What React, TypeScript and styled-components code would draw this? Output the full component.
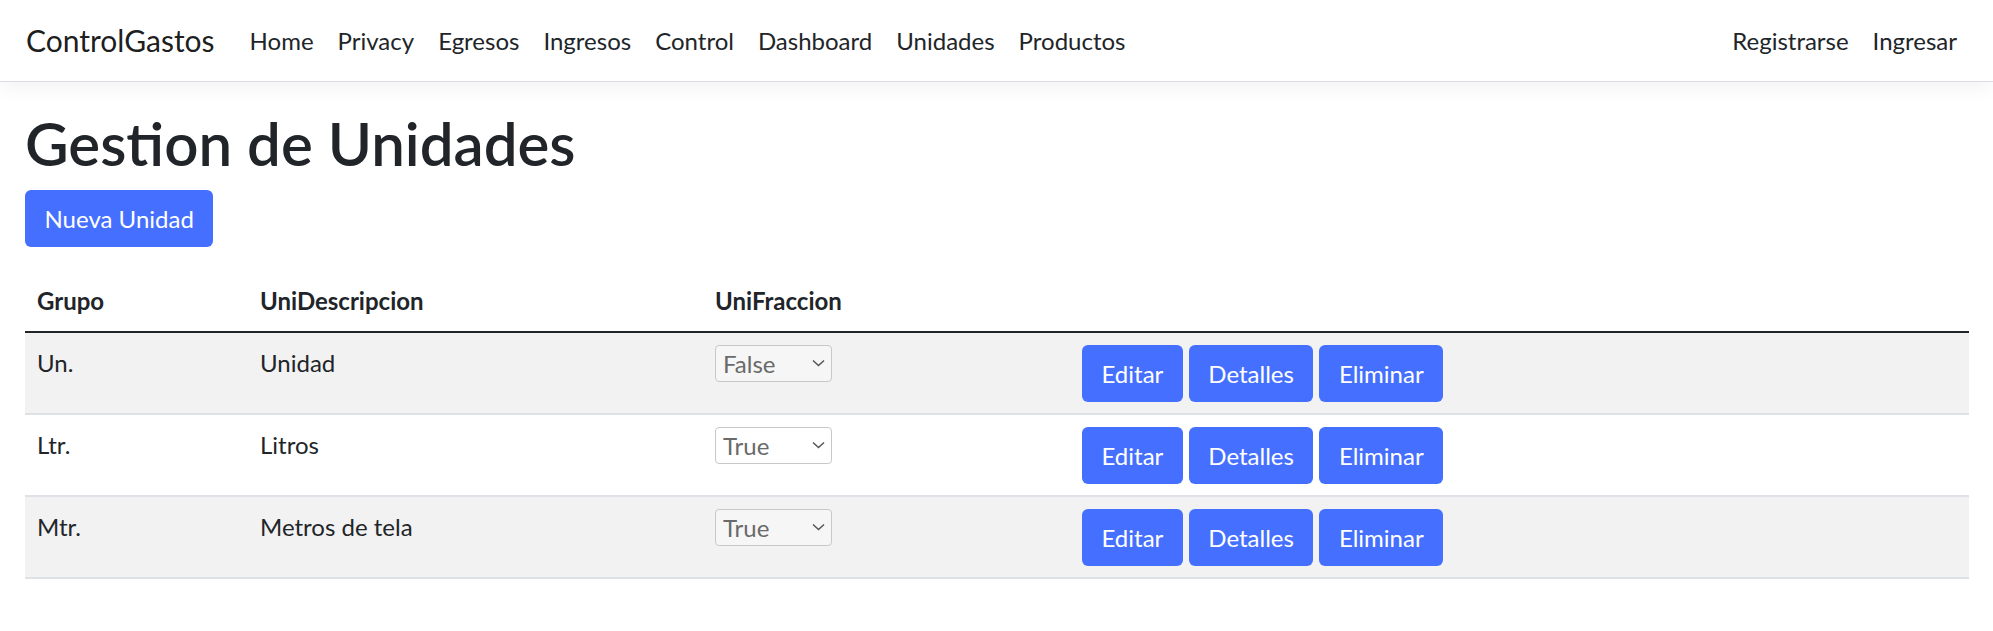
import React from "react";
import styled, { createGlobalStyle } from "styled-components";

const GlobalStyle = createGlobalStyle`
  *, *::before, *::after { box-sizing: border-box; }
  html, body { margin: 0; padding: 0; background: #ffffff; }
  body {
    font-family: Lato, "Open Sans", "Noto Sans", sans-serif;
    font-size: 24px;
    line-height: 36px;
    color: #212529;
  }
`;

const Navbar = styled.nav`
  height: 82px;
  display: flex;
  align-items: center;
  padding: 0 24px;
  background: #ffffff;
  border-bottom: 1px solid #dcdce6;
  box-shadow: 0 6px 18px rgba(0, 0, 0, 0.05);
`;

const Brand = styled.a`
  font-size: 30px;
  line-height: 45px;
  color: rgba(0, 0, 0, 0.9);
  text-decoration: none;
  margin-right: 23px;
  padding-left: 2px;
`;

const NavList = styled.ul<{ $end?: boolean }>`
  display: flex;
  list-style: none;
  margin: 0 0 0 ${(p) => (p.$end ? "auto" : "0")};
  padding: 0;
`;

const NavLink = styled.a`
  display: block;
  padding: 12px;
  font-size: 24px;
  line-height: 36px;
  color: #212529;
  text-decoration: none;
`;

const Main = styled.main`
  padding: 24px 24px 0 25px;
`;

const Title = styled.h1`
  margin: 0 0 12px;
  padding-top: 3px;
  font-size: 60px;
  line-height: 69px;
  font-weight: 600;
  color: #212529;
`;

const Toolbar = styled.p`
  margin: 0 0 24px;
`;

const Button = styled.button`
  display: inline-block;
  padding: 10.5px 19.5px;
  border: none;
  border-radius: 6px;
  background: #4570ff;
  color: #ffffff;
  font-family: inherit;
  font-size: 24px;
  line-height: 36px;
  cursor: pointer;
`;

const Table = styled.table`
  width: 100%;
  border-collapse: collapse;
  table-layout: fixed;
`;

const Col = styled.col<{ $w?: number }>`
  width: ${(p) => (p.$w ? `${p.$w}px` : "auto")};
`;

const HeadCell = styled.th`
  text-align: left;
  font-weight: 700;
  padding: 12px;
  line-height: 36px;
  vertical-align: bottom;
  border-bottom: 2px solid #212529;
`;

const Row = styled.tr<{ $striped: boolean }>`
  background: ${(p) => (p.$striped ? "#f2f2f2" : "#ffffff")};
`;

const Cell = styled.td`
  padding: 12px 12px 11px;
  vertical-align: top;
  line-height: 36px;
  border-bottom: 2px solid #dee2e6;
`;

const SelectWrap = styled.div`
  position: relative;
  display: inline-block;
  width: 117px;
  height: 37px;
`;

const Select = styled.select`
  appearance: none;
  -webkit-appearance: none;
  width: 100%;
  height: 37px;
  margin: 0;
  padding: 0 0 0 7px;
  border: 1px solid #c8c8c8;
  border-radius: 4px;
  background: rgba(255, 255, 255, 0.35);
  color: #6a6a6a;
  font-family: inherit;
  font-size: 24px;
  line-height: 35px;
  opacity: 1;
`;

const Chevron = styled.svg`
  position: absolute;
  right: 7px;
  top: 14px;
  pointer-events: none;
`;

const Actions = styled.div`
  display: flex;
  gap: 6px;
`;

type Unidad = { grupo: string; desc: string; fraccion: boolean };

const data: Unidad[] = [
  { grupo: "Un.", desc: "Unidad", fraccion: false },
  { grupo: "Ltr.", desc: "Litros", fraccion: true },
  { grupo: "Mtr.", desc: "Metros de tela", fraccion: true },
];

export default function App() {
  return (
    <>
      <GlobalStyle />
      <Navbar>
        <Brand href="#">ControlGastos</Brand>
        <NavList>
          {["Home", "Privacy", "Egresos", "Ingresos", "Control", "Dashboard", "Unidades", "Productos"].map((l) => (
            <li key={l}>
              <NavLink href="#">{l}</NavLink>
            </li>
          ))}
        </NavList>
        <NavList $end>
          <li>
            <NavLink href="#">Registrarse</NavLink>
          </li>
          <li>
            <NavLink href="#">Ingresar</NavLink>
          </li>
        </NavList>
      </Navbar>
      <Main>
        <Title>Gestion de Unidades</Title>
        <Toolbar>
          <Button>Nueva Unidad</Button>
        </Toolbar>
        <Table>
          <colgroup>
            <Col $w={223} />
            <Col $w={455} />
            <Col $w={367} />
            <Col />
          </colgroup>
          <thead>
            <tr>
              <HeadCell>Grupo</HeadCell>
              <HeadCell>UniDescripcion</HeadCell>
              <HeadCell>UniFraccion</HeadCell>
              <HeadCell />
            </tr>
          </thead>
          <tbody>
            {data.map((u, i) => (
              <Row key={u.grupo} $striped={i % 2 === 0}>
                <Cell>{u.grupo}</Cell>
                <Cell>{u.desc}</Cell>
                <Cell>
                  <SelectWrap>
                    <Select disabled defaultValue={u.fraccion ? "true" : "false"}>
                      <option value="true">True</option>
                      <option value="false">False</option>
                    </Select>
                    <Chevron width="13" height="8" viewBox="0 0 13 8">
                      <path d="M1 1.5 L6.5 6.5 L12 1.5" fill="none" stroke="#555" strokeWidth="1.5" />
                    </Chevron>
                  </SelectWrap>
                </Cell>
                <Cell>
                  <Actions>
                    <Button>Editar</Button>
                    <Button>Detalles</Button>
                    <Button>Eliminar</Button>
                  </Actions>
                </Cell>
              </Row>
            ))}
          </tbody>
        </Table>
      </Main>
    </>
  );
}
